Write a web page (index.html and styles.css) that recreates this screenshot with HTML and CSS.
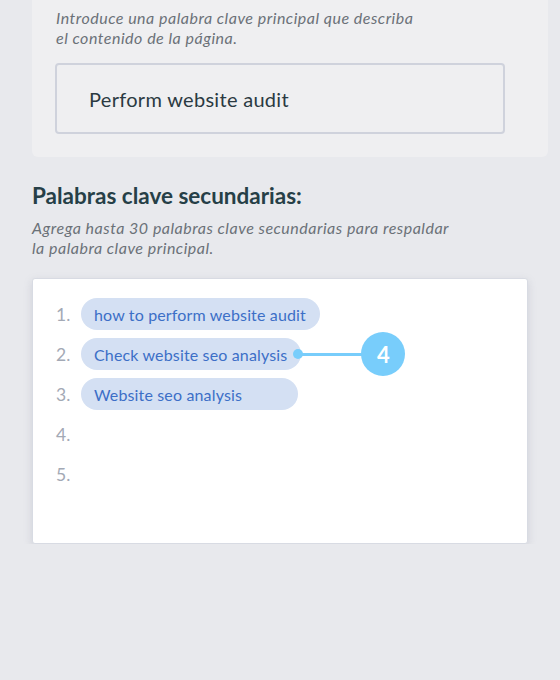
FILE: index.html
```html
<!DOCTYPE html>
<html lang="es">
<head>
    <meta charset="UTF-8">
    <title>Palabras clave</title>
    <link rel="stylesheet" href="styles.css">
</head>
<body>

    <div class="main-card">
        <p class="hint">Introduce una palabra clave principal que describa<br>el contenido de la página.</p>
        <div class="main-input">Perform website audit</div>
    </div>

    <div class="secondary">
        <h2>Palabras clave secundarias:</h2>
        <p class="hint">Agrega hasta 30 palabras clave secundarias para respaldar<br>la palabra clave principal.</p>

        <div class="keyword-box">
            <ol class="keywords">
                <li><span class="num">1.</span><span class="pill">how to perform website audit</span></li>
                <li>
                    <span class="num">2.</span><span class="pill">Check website seo analysis</span>
                    <span class="callout"><span class="dot"></span><span class="line"></span><span class="badge">4</span></span>
                </li>
                <li><span class="num">3.</span><span class="pill">Website seo analysis</span></li>
                <li><span class="num">4.</span></li>
                <li><span class="num">5.</span></li>
            </ol>
        </div>
    </div>

</body>
</html>
```

FILE: styles.css
```css
body {
    margin: 0;
    font-family: Lato, "Open Sans", sans-serif;
    background-color: #e8e9ed;
    color: #263d45;
}

.main-card {
    margin: 0 12px 0 32px;
    padding: 8px 24px 23px 23px;
    background-color: #efeff1;
    border-radius: 0 0 6px 6px;
}

.hint {
    margin: 0;
    font-style: italic;
    font-size: 16px;
    letter-spacing: 0.5px;
    line-height: 20px;
    color: #6b7178;
}

.main-card .hint {
    padding-left: 1px;
}

.main-input {
    margin-top: 15px;
    height: 67px;
    width: 382px;
    padding: 0 32px;
    display: flex;
    align-items: center;
    border: 2px solid #cfd2dc;
    border-radius: 4px;
    font-size: 20px;
    letter-spacing: 0.3px;
    color: #2b3a42;
}

.secondary {
    padding: 0 32px;
}

.secondary h2 {
    margin: 24px 0 0 0;
    font-size: 22.5px;
    line-height: 30px;
    font-weight: bold;
    color: #263f47;
}

.secondary .hint {
    margin-top: 7px;
}

.keyword-box {
    margin-top: 20px;
    width: 494px;
    height: 264px;
    background-color: #fff;
    border: 1px solid #d8dbe3;
    border-radius: 3px;
    box-shadow: 0 3px 9px rgba(120, 125, 145, 0.22);
}

.keywords {
    list-style: none;
    margin: 0;
    padding: 19px 23px;
    display: flex;
    flex-direction: column;
    gap: 8px;
}

.keywords li {
    display: flex;
    align-items: center;
    height: 32px;
}

.num {
    width: 25px;
    font-size: 17.5px;
    color: #a3a9b5;
}

.pill {
    box-sizing: border-box;
    min-width: 217px;
    height: 32px;
    display: flex;
    align-items: center;
    padding: 0 14px 0 13px;
    border-radius: 16px;
    background-color: #d4e0f3;
    color: #3c6fc7;
    font-size: 16px;
    letter-spacing: 0.15px;
}

.callout {
    display: flex;
    align-items: center;
    margin-left: -8px;
}

.dot {
    width: 10px;
    height: 10px;
    border-radius: 50%;
    background-color: #78cdfb;
}

.line {
    width: 62px;
    height: 3px;
    margin-left: -2px;
    background-color: #78cdfb;
}

.badge {
    width: 44px;
    height: 44px;
    margin-left: -2px;
    border-radius: 50%;
    background-color: #78cdfb;
    color: #fff;
    font-weight: bold;
    font-size: 22px;
    display: flex;
    align-items: center;
    justify-content: center;
}
```
